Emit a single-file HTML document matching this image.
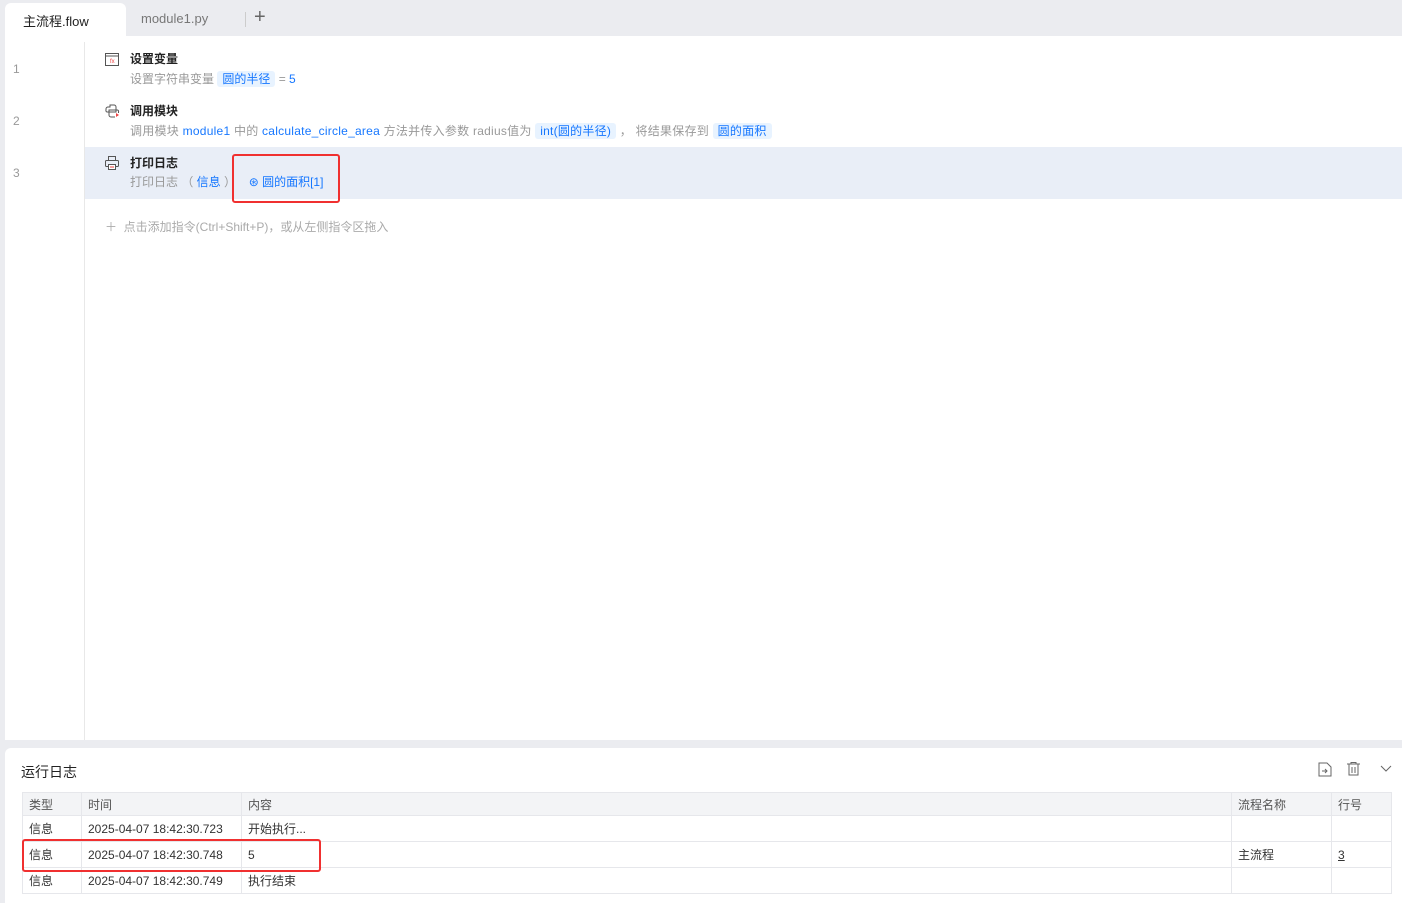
<!DOCTYPE html>
<html><head><meta charset="utf-8"><style>
*{box-sizing:border-box;margin:0;padding:0}
body{width:1402px;height:903px;overflow:hidden;background:#ebecf0;font-family:"Liberation Sans","Noto Sans CJK SC",sans-serif;font-size:12px;color:#333;position:relative}
.abs{position:absolute}
.tag{background:#e8f3ff;color:#1677ff;border-radius:3px;padding:1px 5px}
.blue{color:#1677ff}
.g{color:#999}
.title{font-weight:bold;color:#222;font-size:12px}
table{border-collapse:collapse;position:absolute;left:22px;top:792px;width:1370px;font-size:12px}
td{border:1px solid #e6e7eb;height:26px;padding:0 6px;color:#333}
tr.h td{background:#f3f4f6;height:23px;color:#555}
</style></head><body>
<div class="abs" style="left:5px;top:3px;width:121px;height:34px;background:#fff;border-radius:6px 6px 0 0"></div>
<div class="abs" style="left:23px;top:11px;font-size:13px;color:#222">主流程.flow</div>
<div class="abs" style="left:141px;top:11px;font-size:13px;color:#777">module1.py</div>
<div class="abs" style="left:245px;top:12px;width:1px;height:15px;background:#ccc"></div>
<div class="abs" style="left:254px;top:6px;font-size:20px;color:#666;font-weight:300">+</div>
<div class="abs" style="left:5px;top:36px;width:1397px;height:704px;background:#fff"></div>
<div class="abs" style="left:84px;top:42px;width:1px;height:698px;background:#e8e8e8"></div>
<div class="abs" style="left:85px;top:147px;width:1317px;height:52px;background:#e9eef7"></div>
<div class="abs g" style="left:13px;top:62px">1</div>
<div class="abs g" style="left:13px;top:114px">2</div>
<div class="abs g" style="left:13px;top:166px">3</div>
<svg class="abs" style="left:105px;top:53px" width="14" height="13"><rect x="0.5" y="0.5" width="13" height="12" fill="none" stroke="#555"/><line x1="1" y1="3" x2="13" y2="3" stroke="#555"/><text x="5" y="10" font-size="6" fill="#e44">fx</text></svg>
<div class="abs title" style="left:130px;top:50px">设置变量</div>
<div class="abs g" style="left:130px;top:70px">设置字符串变量 <span class="tag">圆的半径</span> = <span class="blue">5</span></div>
<svg class="abs" style="left:105px;top:104px" width="15" height="14"><path d="M5 1h4a2 2 0 0 1 2 2v3H4v2H2a1.5 1.5 0 0 1-1-2V5a2 2 0 0 1 2-2h2zM10 13H6a2 2 0 0 1-2-2V8h7V6h1.5a1.5 1.5 0 0 1 1 2v1" fill="none" stroke="#555"/><path d="M11 9l3 2-3 2z" fill="#e44"/></svg>
<div class="abs title" style="left:130px;top:102px">调用模块</div>
<div class="abs g" style="left:130px;top:122px;letter-spacing:0.25px">调用模块 <span class="blue">module1</span> 中的 <span class="blue">calculate_circle_area</span> 方法并传入参数 radius值为 <span class="tag">int(圆的半径)</span> ， 将结果保存到 <span class="tag">圆的面积</span></div>
<svg class="abs" style="left:105px;top:156px" width="14" height="14"><rect x="3.5" y="0.5" width="7" height="4" fill="none" stroke="#555"/><rect x="0.5" y="4.5" width="13" height="6" rx="1" fill="none" stroke="#555"/><rect x="3.5" y="8.5" width="7" height="5" fill="#fff" stroke="#555"/><line x1="5" y1="11" x2="9" y2="11" stroke="#e44"/></svg>
<div class="abs title" style="left:130px;top:154px">打印日志</div>
<div class="abs g" style="left:130px;top:173px">打印日志 （ <span class="blue">信息</span> ）：&nbsp;&nbsp;<span class="blue">⊛ 圆的面积[1]</span></div>
<div class="abs" style="left:232px;top:154px;width:108px;height:49px;border:2.5px solid #f03030;border-radius:3px"></div>
<div class="abs" style="left:105px;top:218px;color:#aaa">＋ &nbsp;点击添加指令(Ctrl+Shift+P)，或从左侧指令区拖入</div>
<div class="abs" style="left:5px;top:748px;width:1397px;height:155px;background:#fff;border-radius:6px 0 0 0"></div>
<div class="abs" style="left:21px;top:762px;font-size:14px;color:#222">运行日志</div>
<svg class="abs" style="left:1318px;top:762px" width="14" height="15"><path d="M1 1h8l4 4v9H1z" fill="none" stroke="#666"/><path d="M4 9h5M7 7l2 2-2 2" fill="none" stroke="#666"/></svg>
<svg class="abs" style="left:1347px;top:762px" width="13" height="14"><path d="M0 2h13M4 2V0.5h5V2M2 2v11h9V2M5 5v6M8 5v6" fill="none" stroke="#666"/></svg>
<svg class="abs" style="left:1380px;top:765px" width="12" height="8"><path d="M1 1l5 5 5-5" fill="none" stroke="#666"/></svg>
<table>
<tr class="h"><td style="width:59px">类型</td><td style="width:160px">时间</td><td>内容</td><td style="width:100px">流程名称</td><td style="width:60px">行号</td></tr>
<tr><td>信息</td><td>2025-04-07 18:42:30.723</td><td>开始执行...</td><td></td><td></td></tr>
<tr><td>信息</td><td>2025-04-07 18:42:30.748</td><td>5</td><td>主流程</td><td><u>3</u></td></tr>
<tr><td>信息</td><td>2025-04-07 18:42:30.749</td><td>执行结束</td><td></td><td></td></tr>
</table>
<div class="abs" style="left:22px;top:839px;width:299px;height:33px;border:2.5px solid #f03030;border-radius:3px"></div>
</body></html>
